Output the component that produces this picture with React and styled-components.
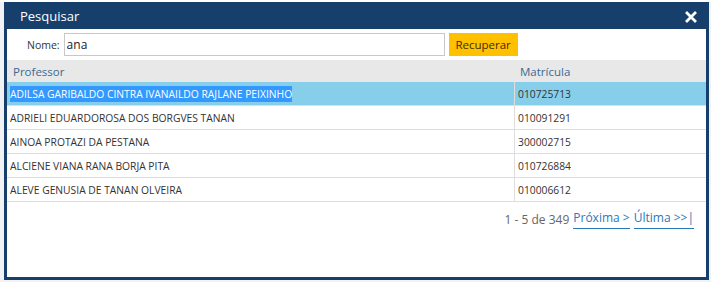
import React from "react";
import styled, { createGlobalStyle } from "styled-components";

const Global = createGlobalStyle`
  html, body { margin: 0; padding: 0; background: #f1f2f4; }
  body { font-family: "Open Sans", "Noto Sans", sans-serif; }
`;

const Page = styled.div`
  padding: 2px 0 0 4px;
  height: 282px;
  box-sizing: border-box;
  background: linear-gradient(#fff 0 2px, transparent 2px);
`;

const Dialog = styled.div`
  width: 705px;
  height: 278px;
  box-sizing: border-box;
  border: 3px solid #163f6b;
  background: #fff;
  display: flex;
  flex-direction: column;
`;

const TitleBar = styled.div`
  height: 24px;
  flex: none;
  background: #163f6b;
  display: flex;
  align-items: center;
  justify-content: space-between;
  padding: 0 9px 0 13px;
`;

const Title = styled.span`
  color: #fff;
  font-size: 13px;
  line-height: 1;
  margin-top: -1px;
`;

const Close = styled.button`
  border: 0;
  background: none;
  padding: 0;
  width: 12px;
  height: 12px;
  display: flex;
  cursor: pointer;
`;

const SearchRow = styled.div`
  height: 31px;
  flex: none;
  display: flex;
  align-items: center;
  padding-left: 20px;
  gap: 4px;
`;

const Label = styled.label`
  font-size: 10.5px;
  color: #333;
`;

const Input = styled.input`
  width: 381px;
  height: 23px;
  box-sizing: border-box;
  border: 1px solid #c8c8c8;
  padding: 0 2px;
  font-family: inherit;
  font-size: 12px;
  color: #222;
  outline: none;
`;

const Button = styled.button`
  width: 69px;
  height: 23px;
  border: 0;
  background: #ffc000;
  color: #3a2f00;
  font-family: inherit;
  font-size: 11.5px;
  padding: 0;
`;

const Table = styled.div`
  display: grid;
  grid-template-columns: 507px 1fr;
`;

const HeadCell = styled.div`
  height: 22px;
  background: #e8e8e8;
  color: #3b6a92;
  font-size: 11.5px;
  display: flex;
  align-items: center;
  padding-left: 6px;
`;

const Cell = styled.div`
  height: 23px;
  border-bottom: 1px solid #dedede;
  border-left: ${(p) => (p.$divider ? "1px solid #dedede" : "0")};
  background: ${(p) => (p.$selected ? "#87ceeb" : "#fff")};
  display: flex;
  align-items: center;
  padding-left: 3px;
  font-size: 10.3px;
  color: #333;
  white-space: nowrap;
`;

const Selection = styled.span`
  background: #3399ff;
  color: #fff;
  padding: 1px 0;
`;

const Pager = styled.div`
  display: flex;
  justify-content: flex-end;
  align-items: center;
  gap: 4px;
  padding: 7px 12px 0 0;
  font-size: 12px;
  color: #666;
`;

const PageLink = styled.a`
  color: #2a7ab8;
  text-decoration: none;
  border-bottom: 1px solid #2a7ab8;
  padding-bottom: 2px;
  cursor: pointer;
`;

const rows = [
  ["ADILSA GARIBALDO CINTRA IVANAILDO RAJLANE PEIXINHO", "010725713"],
  ["ADRIELI EDUARDOROSA DOS BORGVES TANAN", "010091291"],
  ["AINOA PROTAZI DA PESTANA", "300002715"],
  ["ALCIENE VIANA RANA BORJA PITA", "010726884"],
  ["ALEVE GENUSIA DE TANAN OLVEIRA", "010006612"],
];

export default function App() {
  return (
    <Page>
      <Global />
      <Dialog>
        <TitleBar>
          <Title>Pesquisar</Title>
          <Close aria-label="Fechar">
            <svg width="12" height="12" viewBox="0 0 12 12">
              <path d="M2 2 L10 10 M10 2 L2 10" stroke="#fff" strokeWidth="2.8" strokeLinecap="square" />
            </svg>
          </Close>
        </TitleBar>
        <SearchRow>
          <Label>Nome:</Label>
          <Input defaultValue="ana" />
          <Button>Recuperar</Button>
        </SearchRow>
        <Table>
          <HeadCell>Professor</HeadCell>
          <HeadCell>Matrícula</HeadCell>
          {rows.map(([name, mat], i) => (
            <React.Fragment key={mat}>
              <Cell $selected={i === 0}>
                {i === 0 ? <Selection>{name}</Selection> : name}
              </Cell>
              <Cell $selected={i === 0} $divider>
                {mat}
              </Cell>
            </React.Fragment>
          ))}
        </Table>
        <Pager>
          <span>1 - 5 de 349</span>
          <PageLink>Próxima &gt;</PageLink>
          <PageLink>Última &gt;&gt;|</PageLink>
        </Pager>
      </Dialog>
    </Page>
  );
}
